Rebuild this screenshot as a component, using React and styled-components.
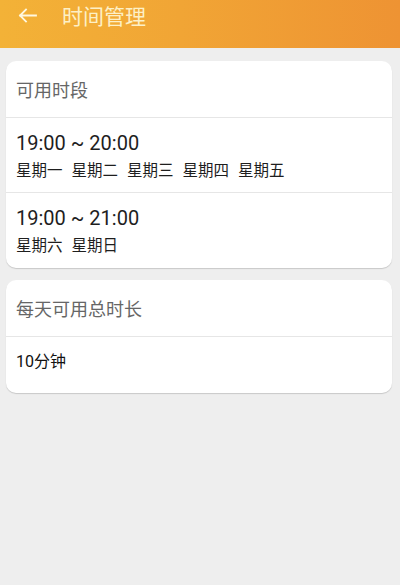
import React from "react";
import styled, { createGlobalStyle } from "styled-components";

const GlobalStyle = createGlobalStyle`
	html, body {
		margin: 0;
		padding: 0;
		background: #eeeeee;
		font-family: Roboto, "Noto Sans CJK SC", sans-serif;
	}
`;

const Page = styled.div`
	min-height: 585px;
	background: #eeeeee;
`;

const Header = styled.div`
	display: flex;
	align-items: flex-start;
	height: 48px;
	padding-top: 5px;
	background: linear-gradient(90deg, #f3b237 0%, #f1a535 45%, #ee9333 100%);
	box-sizing: border-box;
`;

const BackBtn = styled.div`
	display: flex;
	align-items: center;
	justify-content: center;
	width: 54px;
	height: 21px;
`;

const Title = styled.div`
	margin-left: 8px;
	font-size: 21px;
	line-height: 24px;
	color: #fdf0c6;
`;

const Body = styled.div`
	display: flex;
	flex-direction: column;
	gap: 12px;
	padding: 13px 8px 0 6px;
`;

const Card = styled.div`
	background: #ffffff;
	border-radius: 10px;
	box-shadow: 0 1px 1px rgba(0, 0, 0, 0.16);
	overflow: hidden;
`;

const CardHead = styled.div`
	display: flex;
	align-items: center;
	height: 56px;
	padding-left: 10px;
	font-size: 18px;
	color: #666666;
	border-bottom: 1px solid #e6e6e6;
`;

const SlotRow = styled.div`
	display: flex;
	flex-direction: column;
	height: 75px;
	padding: 13px 0 0 10px;
	box-sizing: border-box;
	border-bottom: ${(p) => (p.$last ? "none" : "1px solid #e6e6e6")};
`;

const SlotTime = styled.div`
	font-size: 20px;
	line-height: 24px;
	color: #1e1e1e;
`;

const Days = styled.div`
	display: flex;
	gap: 9px;
	margin-top: 6px;
	font-size: 15.5px;
	line-height: 20px;
	color: #1e1e1e;
`;

const ValueRow = styled.div`
	height: 56px;
	padding: 15px 0 0 10px;
	box-sizing: border-box;
	font-size: 16px;
	line-height: 20px;
	color: #111111;
`;

const slots = [
	{ time: "19:00 ~ 20:00", days: ["星期一", "星期二", "星期三", "星期四", "星期五"] },
	{ time: "19:00 ~ 21:00", days: ["星期六", "星期日"] },
];

export default function App() {
	return (
		<Page>
			<GlobalStyle />
			<Header>
				<BackBtn>
					<svg width="19" height="15" viewBox="0 0 19 15" fill="none">
						<path
							d="M18 7.5H2M8 1.5L2 7.5L8 13.5"
							stroke="#fff8e0"
							strokeWidth="1.8"
							strokeLinecap="square"
						/>
					</svg>
				</BackBtn>
				<Title>时间管理</Title>
			</Header>
			<Body>
				<Card>
					<CardHead>可用时段</CardHead>
					{slots.map((s, i) => (
						<SlotRow key={i} $last={i === slots.length - 1}>
							<SlotTime>{s.time}</SlotTime>
							<Days>
								{s.days.map((d) => (
									<span key={d}>{d}</span>
								))}
							</Days>
						</SlotRow>
					))}
				</Card>
				<Card>
					<CardHead>每天可用总时长</CardHead>
					<ValueRow>10分钟</ValueRow>
				</Card>
			</Body>
		</Page>
	);
}
